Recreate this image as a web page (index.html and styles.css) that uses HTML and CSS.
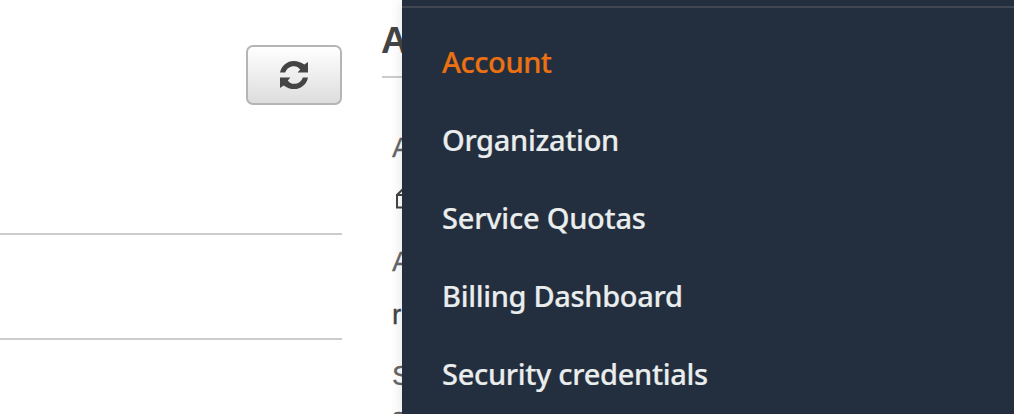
FILE: index.html
```html
<!DOCTYPE html>
<html lang="en">
<head>
<meta charset="utf-8">
<title>Account</title>
<link rel="stylesheet" href="styles.css">
</head>
<body>
<div class="page">
  <section class="panel">
    <div class="toolbar">
      <button class="refresh" aria-label="Refresh">
        <svg class="refresh-icon" viewBox="0 0 28 28">
          <path d="M0 11.6C1.3 4.8 7 0 13.8 0C17.6 0 21 1.2 24.3 3.6L28 1V11.6H17.6L20.2 8.6C18.6 6.4 16.6 5.2 14 5.2C10 5.2 6.5 7.6 5.2 11.6Z"/>
          <path d="M28 16.4C26.7 23.2 21 28 14.2 28C10.4 28 7 26.8 3.7 24.4L0 27V16.4H10.4L7.8 19.4C9.4 21.6 11.4 22.8 14 22.8C18 22.8 21.5 20.4 22.8 16.4Z"/>
        </svg>
      </button>
    </div>
    <div class="row"></div>
    <div class="row"></div>
  </section>
  <section class="details">
    <h2 class="heading"><span class="heading-text">A</span></h2>
    <div class="fields">
      <div class="label">A</div>
      <div class="copy">
        <svg class="copy-icon" viewBox="0 0 20 22"><path d="M1 8H14V20.5H1ZM1 8L7 2H19V14L14 20"/></svg>
      </div>
      <div class="label second">A</div>
      <div class="value">r</div>
      <div class="label third">S</div>
      <div class="value last">s</div>
    </div>
  </section>
</div>
<nav class="menu">
  <a class="item active account">Account</a>
  <a class="item organization">Organization</a>
  <a class="item quotas">Service Quotas</a>
  <a class="item billing">Billing Dashboard</a>
  <a class="item security">Security credentials</a>
</nav>
</body>
</html>
```
FILE: styles.css
```css
* { box-sizing: border-box; }
body { margin: 0; width: 1014px; height: 414px; overflow: hidden; position: relative; background: #fff; font-family: "Liberation Sans", Arial, sans-serif; }
.page { display: flex; gap: 40px; height: 414px; overflow: hidden; }
.panel { width: 342px; }
.toolbar { display: flex; justify-content: flex-end; height: 235px; padding-top: 45px; border-bottom: 2px solid #ccc; }
.refresh { width: 96px; height: 60px; padding: 0; display: flex; align-items: center; justify-content: center; border: 2px solid #b5b5b5; border-radius: 7px; background: linear-gradient(#fff, #ddd); }
.refresh-icon { width: 28px; height: 28px; fill: #444; }
.row { height: 105px; border-bottom: 2px solid #ccc; }
.row:last-child { border: 0; }
.details { width: 300px; }
.heading { margin: 0; height: 78px; padding-top: 20px; border-bottom: 2px solid #ccc; font-size: 37px; line-height: 42px; color: #444; }
.heading-text { margin-left: -1px; }
.fields { padding: 54px 0 0 10px; font-size: 28px; line-height: 32px; }
.label { height: 32px; color: #666; -webkit-text-stroke: .3px #666; }
.copy { height: 34px; padding: 23px 0 0 4px; }
.copy-icon { display: block; width: 20px; height: 22px; fill: none; stroke: #444; stroke-width: 2; }
.second { margin-top: 48px; }
.value { height: 32px; margin-top: 21px; color: #444; -webkit-text-stroke: .3px #444; }
.third { margin-top: 29px; }
.last { margin-top: 10px; color: #666; }
.menu { position: absolute; left: 402px; top: 0; width: 612px; height: 414px; padding: 23px 0 0 40px; background: linear-gradient(#414750, #414750) 0 6px / 100% 2px no-repeat #232f3e; box-shadow: 0 0 12px rgba(0, 0, 0, .12); }
.item { display: block; width: max-content; height: 78px; font: 500 29px/78px "Noto Sans", sans-serif; color: #eaeded; -webkit-text-stroke: .2px currentColor; }
.active { color: #ec7211; }
.account { letter-spacing: -.45px; }
.organization { letter-spacing: -.3px; }
.quotas { letter-spacing: -.22px; }
.billing { letter-spacing: -.32px; }
.security { letter-spacing: -.3px; }
```
